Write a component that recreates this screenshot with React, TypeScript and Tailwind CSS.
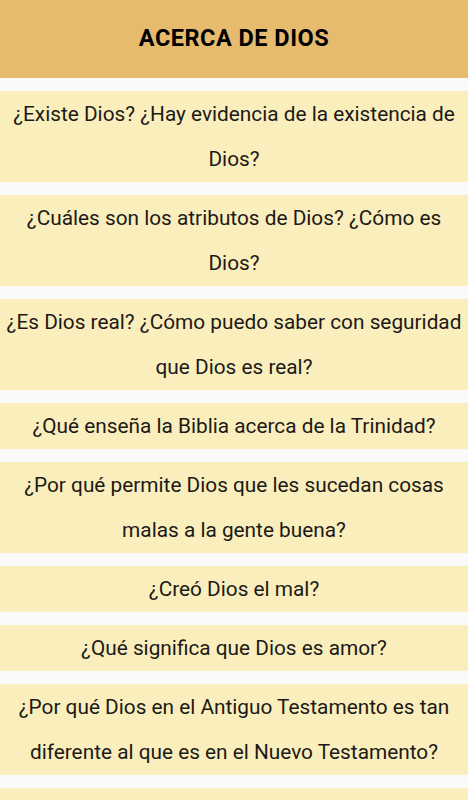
const preguntas = [
  "¿Existe Dios? ¿Hay evidencia de la existencia de Dios?",
  "¿Cuáles son los atributos de Dios? ¿Cómo es Dios?",
  "¿Es Dios real? ¿Cómo puedo saber con seguridad que Dios es real?",
  "¿Qué enseña la Biblia acerca de la Trinidad?",
  "¿Por qué permite Dios que les sucedan cosas malas a la gente buena?",
  "¿Creó Dios el mal?",
  "¿Qué significa que Dios es amor?",
  "¿Por qué Dios en el Antiguo Testamento es tan diferente al que es en el Nuevo Testamento?",
  "¿Es Jesús Dios? ¿Alguna vez Jesús afirmó ser Dios?",
];

const App = () => {
  return (
    <div className="h-screen overflow-hidden bg-[#fafafa] font-['Roboto',sans-serif] text-[#1c1a17]">
      <header className="h-[78px] bg-[#e7bb6e] flex items-center justify-center">
        <h1 className="text-[23.5px] font-bold tracking-[0.5px] text-black">ACERCA DE DIOS</h1>
      </header>
      <ul className="flex flex-col gap-[13px] pt-[13px]">
        {preguntas.map((q) => (
          <li key={q} className="bg-[#faeebd] px-1 py-[0.5px] text-center text-[20.8px] leading-[45px]">
            {q}
          </li>
        ))}
      </ul>
    </div>
  );
};

export default App;
